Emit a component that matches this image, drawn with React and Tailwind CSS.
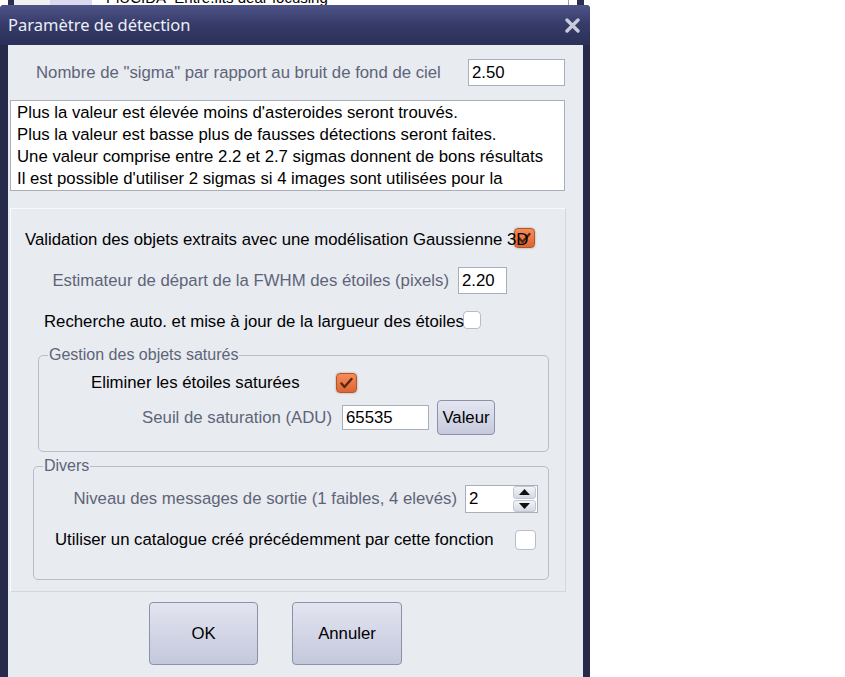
import React from "react";

const OrangeBox = ({ tick = true, className = "" }) => (
  <span
    className={`flex items-center justify-center rounded-[4px] border border-[#b0562c] bg-gradient-to-b from-[#f48c5a] to-[#de6531] shadow-[0_0_2px_rgba(120,60,20,0.5)] ${className}`}
  >
    {tick && (
      <svg width="13" height="12" viewBox="0 0 13 12">
        <path d="M1.5 6.5 L4.5 10 L11.5 2" fill="none" stroke="#5a2710" strokeWidth="2.4" strokeLinecap="round" strokeLinejoin="round" />
      </svg>
    )}
  </span>
);

const WhiteBox = ({ className = "" }) => (
  <span className={`block rounded-[4px] border border-[#b6bccb] bg-white ${className}`} />
);

const Field = ({ value, className = "" }) => (
  <div className={`flex items-center border border-[#a9aebb] bg-white pl-[3px] text-[16.75px] text-black ${className}`}>
    {value}
  </div>
);

const Legend = ({ children }) => (
  <span className="absolute left-[9px] top-[-10px] whitespace-nowrap bg-[#e8ebf0] px-[1px] text-[16px] leading-[18px] text-[#5e6478]">
    {children}
  </span>
);

export default function App() {
  return (
    <div className="h-[677px] w-[845px] overflow-hidden bg-white font-['Liberation_Sans',Arial,sans-serif]">
      {/* window behind the dialog */}
      <div className="flex h-[5px] w-[590px] overflow-hidden">
        <div className="w-[8px] bg-white" />
        <div className="w-[6px] bg-[#2a2f4f]" />
        <div className="w-[36px] bg-[#eef0f4]" />
        <div className="w-[42px] bg-[#d9d9ef]" />
        <div className="relative flex-1 overflow-hidden bg-white">
          <span className="absolute left-[14px] top-[-13px] whitespace-nowrap text-[15px] text-black">PlUCIDA_Entre.fits dear focusing</span>
          <div className="absolute right-[21px] top-0 h-full w-px bg-[#9a9aa8]" />
          <div className="absolute right-[6px] top-0 h-full w-[7px] bg-[#2a2f4f]" />
        </div>
      </div>

      {/* dialog */}
      <div className="flex h-[672px] w-[590px] flex-col rounded-t-[4px] bg-[#262b4c]">
        <div className="flex h-[40px] items-center justify-between rounded-t-[4px] bg-gradient-to-b from-[#4e5487] via-[#353a68] to-[#2b3059] pl-[8px] pr-[10px]">
          <span className="font-['Noto_Sans',sans-serif] text-[16.5px] text-[#eceef6]">Paramètre de détection</span>
          <svg width="15" height="15" viewBox="0 0 15 15">
            <path d="M2 2 L13 13 M13 2 L2 13" stroke="#c9ccd8" strokeWidth="3.4" strokeLinecap="round" />
          </svg>
        </div>

        <div className="ml-[8px] mr-[7px] flex flex-1 flex-col bg-[#e8ebf0] pt-[14px] text-[16.75px]">
          {/* sigma */}
          <div className="flex h-[27px] items-center justify-between pl-[28px] pr-[18px]">
            <span className="text-[#5e6478]">Nombre de "sigma" par rapport au bruit de fond de ciel</span>
            <Field value="2.50" className="h-[27px] w-[97px]" />
          </div>

          {/* description */}
          <div className="ml-[2px] mt-[14px] h-[91px] w-[555px] overflow-hidden border border-[#a9aebb] bg-white px-[6px] pt-px leading-[22px] text-black">
            <p>Plus la valeur est élevée moins d'asteroides seront trouvés.</p>
            <p>Plus la valeur est basse plus de fausses détections seront faites.</p>
            <p>Une valeur comprise entre 2.2 et 2.7 sigmas donnent de bons résultats</p>
            <p>Il est possible d'utiliser 2 sigmas si 4 images sont utilisées pour la</p>
            <p>détection</p>
          </div>

          {/* main panel */}
          <div className="ml-[2px] mt-[17px] flex h-[384px] w-[556px] flex-col border border-[#f8f9fb] border-r-[#d3d7df] border-b-[#d3d7df] pt-[18px]">
            <div className="relative h-[22px]">
              <OrangeBox tick className="absolute left-[503px] top-[1px] h-[20px] w-[21px]" />
              <span className="relative whitespace-nowrap pl-[14px] leading-[22px] text-black">
                Validation des objets extraits avec une modélisation Gaussienne 3D
              </span>
            </div>

            <div className="mt-[18px] flex h-[27px] items-center justify-end gap-[9px] pr-[58px]">
              <span className="whitespace-nowrap text-[#5e6478]">Estimateur de départ de la FWHM des étoiles (pixels)</span>
              <Field value="2.20" className="h-[27px] w-[49px]" />
            </div>

            <div className="relative mt-[15px] h-[22px]">
              <WhiteBox className="absolute left-[452px] top-[2px] h-[18px] w-[18px]" />
              <span className="relative whitespace-nowrap pl-[33px] leading-[22px] text-black">
                Recherche auto. et mise à jour de la largueur des étoiles
              </span>
            </div>

            {/* saturated */}
            <div className="relative ml-[27px] mt-[24px] flex h-[97px] w-[511px] flex-col rounded-[5px] border border-[#b9bdc9] pt-[17px]">
              <Legend>Gestion des objets saturés</Legend>
              <div className="flex h-[20px] items-center">
                <span className="w-[297px] whitespace-nowrap pl-[52px] text-black">Eliminer les étoiles saturées</span>
                <OrangeBox tick className="h-[20px] w-[21px]" />
              </div>
              <div className="mt-[7px] flex h-[35px] items-center justify-end pr-[53px]">
                <span className="mr-[10px] whitespace-nowrap text-[#5e6478]">Seuil de saturation (ADU)</span>
                <Field value="65535" className="h-[25px] w-[87px]" />
                <button className="ml-[8px] h-[35px] w-[58px] rounded-[4px] border border-[#8c90a8] bg-gradient-to-b from-[#e4e6f1] to-[#c5c9dc] text-[16.75px] text-black">
                  Valeur
                </button>
              </div>
            </div>

            {/* divers */}
            <div className="relative ml-[22px] mt-[14px] flex h-[114px] w-[516px] flex-col rounded-[5px] border border-[#b9bdc9] pt-[18px]">
              <Legend>Divers</Legend>
              <div className="flex h-[28px] items-center justify-end pr-[10px]">
                <span className="mr-[8px] whitespace-nowrap text-[#5e6478]">Niveau des messages de sortie (1 faibles, 4 elevés)</span>
                <div className="flex h-[28px] w-[73px] items-center border border-[#a9aebb] bg-white pl-[3px] text-black">
                  <span className="flex-1">2</span>
                  <div className="mr-[1px] flex h-[26px] w-[23px] flex-col gap-px">
                    <div className="flex flex-1 items-center justify-center rounded-[3px] border border-[#c3c7d3] bg-gradient-to-b from-[#f4f5f9] to-[#d5d8e3]">
                      <svg width="11" height="6" viewBox="0 0 11 6"><path d="M5.5 0 L11 6 L0 6 Z" fill="#111" /></svg>
                    </div>
                    <div className="flex flex-1 items-center justify-center rounded-[3px] border border-[#c3c7d3] bg-gradient-to-b from-[#f4f5f9] to-[#d5d8e3]">
                      <svg width="11" height="6" viewBox="0 0 11 6"><path d="M0 0 L11 0 L5.5 6 Z" fill="#111" /></svg>
                    </div>
                  </div>
                </div>
              </div>
              <div className="mt-[16px] flex h-[21px] items-center justify-between pl-[21px] pr-[12px]">
                <span className="whitespace-nowrap text-black">Utiliser un catalogue créé précédemment par cette fonction</span>
                <WhiteBox className="h-[20px] w-[21px]" />
              </div>
            </div>
          </div>

          {/* buttons */}
          <div className="mt-[10px] flex gap-[34px] pl-[141px]">
            <button className="h-[63px] w-[109px] rounded-[4px] border border-[#8c90a8] bg-gradient-to-b from-[#e2e4f0] to-[#c4c8dc] text-[16.75px] text-black">
              OK
            </button>
            <button className="h-[63px] w-[110px] rounded-[4px] border border-[#8c90a8] bg-gradient-to-b from-[#e2e4f0] to-[#c4c8dc] text-[16.75px] text-black">
              Annuler
            </button>
          </div>
        </div>
      </div>
    </div>
  );
}
